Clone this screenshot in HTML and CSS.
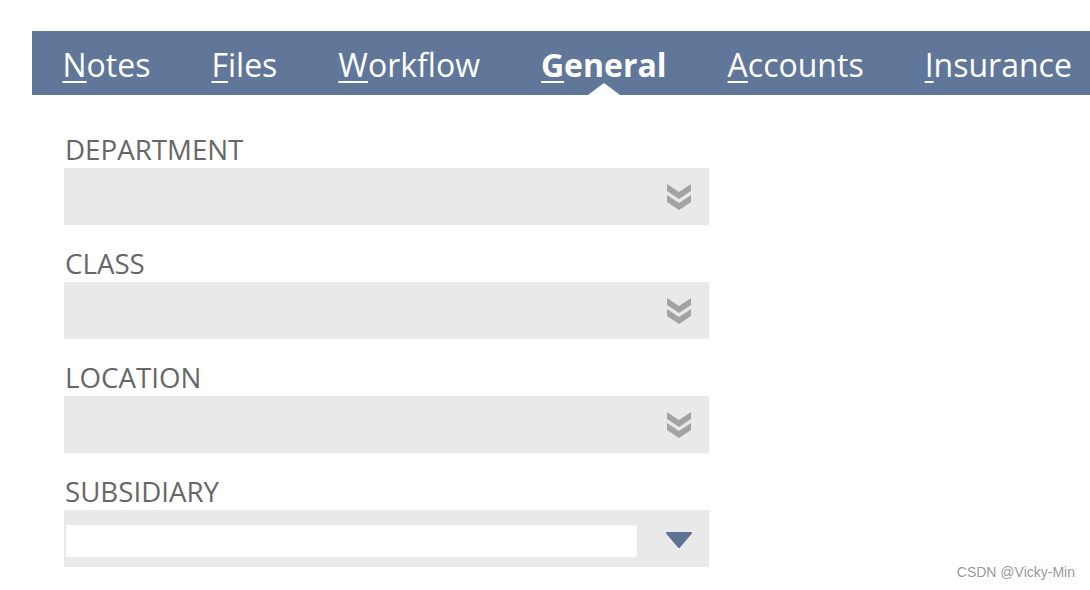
FILE: index.html
```html
<!DOCTYPE html>
<html>
<head>
<meta charset="utf-8">
<link rel="stylesheet" href="styles.css">
</head>
<body>
<div class="page">
  <nav class="tabs">
    <a class="tab"><u>N</u>otes</a>
    <a class="tab"><u>F</u>iles</a>
    <a class="tab"><u>W</u>orkflow</a>
    <a class="tab active"><u>G</u>eneral</a>
    <a class="tab"><u>A</u>ccounts</a>
    <a class="tab"><u>I</u>nsurance</a>
  </nav>
  <div class="form">
    <div class="field">
      <div class="label">DEPARTMENT</div>
      <div class="select">
        <svg class="chev" width="28" height="30" viewBox="0 0 28 30"><path d="M2 2 L14 10 L26 2 L26 9 L14 17 L2 9 Z M2 13 L14 21 L26 13 L26 20 L14 28 L2 20 Z" fill="#a3a3a3"/></svg>
      </div>
    </div>
    <div class="field">
      <div class="label">CLASS</div>
      <div class="select">
        <svg class="chev" width="28" height="30" viewBox="0 0 28 30"><path d="M2 2 L14 10 L26 2 L26 9 L14 17 L2 9 Z M2 13 L14 21 L26 13 L26 20 L14 28 L2 20 Z" fill="#a3a3a3"/></svg>
      </div>
    </div>
    <div class="field">
      <div class="label">LOCATION</div>
      <div class="select">
        <svg class="chev" width="28" height="30" viewBox="0 0 28 30"><path d="M2 2 L14 10 L26 2 L26 9 L14 17 L2 9 Z M2 13 L14 21 L26 13 L26 20 L14 28 L2 20 Z" fill="#a3a3a3"/></svg>
      </div>
    </div>
    <div class="field">
      <div class="label">SUBSIDIARY</div>
      <div class="select sub">
        <div class="input"></div>
        <svg class="tri" width="28" height="18" viewBox="0 0 28 18"><path d="M2 2 L26 2 L14 16 Z" fill="#5e7394" stroke="#5e7394" stroke-width="2" stroke-linejoin="round"/></svg>
      </div>
    </div>
  </div>
  <div class="watermark">CSDN @Vicky-Min</div>
</div>
</body>
</html>
```
FILE: styles.css
```css
html, body {
  margin: 0;
  padding: 0;
  background: #ffffff;
}
body {
  font-family: "Open Sans", "Liberation Sans", sans-serif;
  width: 1090px;
  height: 590px;
  overflow: hidden;
}
.page {
  position: relative;
  width: 1090px;
  height: 590px;
  padding-top: 31px;
  box-sizing: border-box;
}
.tabs {
  margin-left: 32px;
  height: 64px;
  background: #617799;
  display: flex;
  align-items: flex-start;
  white-space: nowrap;
  overflow: hidden;
}
.tab {
  position: relative;
  color: #ffffff;
  font-size: 32px;
  line-height: 60px;
  height: 64px;
  box-sizing: border-box;
  padding: 4px 30.5px 0;
}
.tab u {
  text-decoration-thickness: 2px;
  text-underline-offset: 4px;
}
.tab.active {
  font-weight: 700;
}
.tab.active::after {
  content: "";
  position: absolute;
  left: 50%;
  bottom: 0;
  margin-left: -16px;
  border-left: 16px solid transparent;
  border-right: 16px solid transparent;
  border-bottom: 12px solid #ffffff;
}
.form {
  margin-left: 64px;
  width: 645px;
  padding-top: 35px;
  display: flex;
  flex-direction: column;
  gap: 19px;
}
.field {
  display: flex;
  flex-direction: column;
}
.label {
  color: #676767;
  font-size: 27.7px;
  line-height: 38px;
  padding-left: 1px;
}
.select {
  height: 57px;
  background: #e9e9e9;
  display: flex;
  align-items: center;
  justify-content: flex-end;
  padding-right: 16px;
}
.chev {
  display: block;
}
.select.sub {
  justify-content: space-between;
  padding-left: 2px;
}
.input {
  width: 571px;
  height: 32px;
  margin-top: 5px;
  background: #ffffff;
}
.tri {
  display: block;
  margin-top: 2px;
}
.watermark {
  position: absolute;
  right: 15px;
  bottom: 10px;
  font-family: "Liberation Sans", Arial, sans-serif;
  font-size: 14px;
  color: #9a9a9a;
}
```
